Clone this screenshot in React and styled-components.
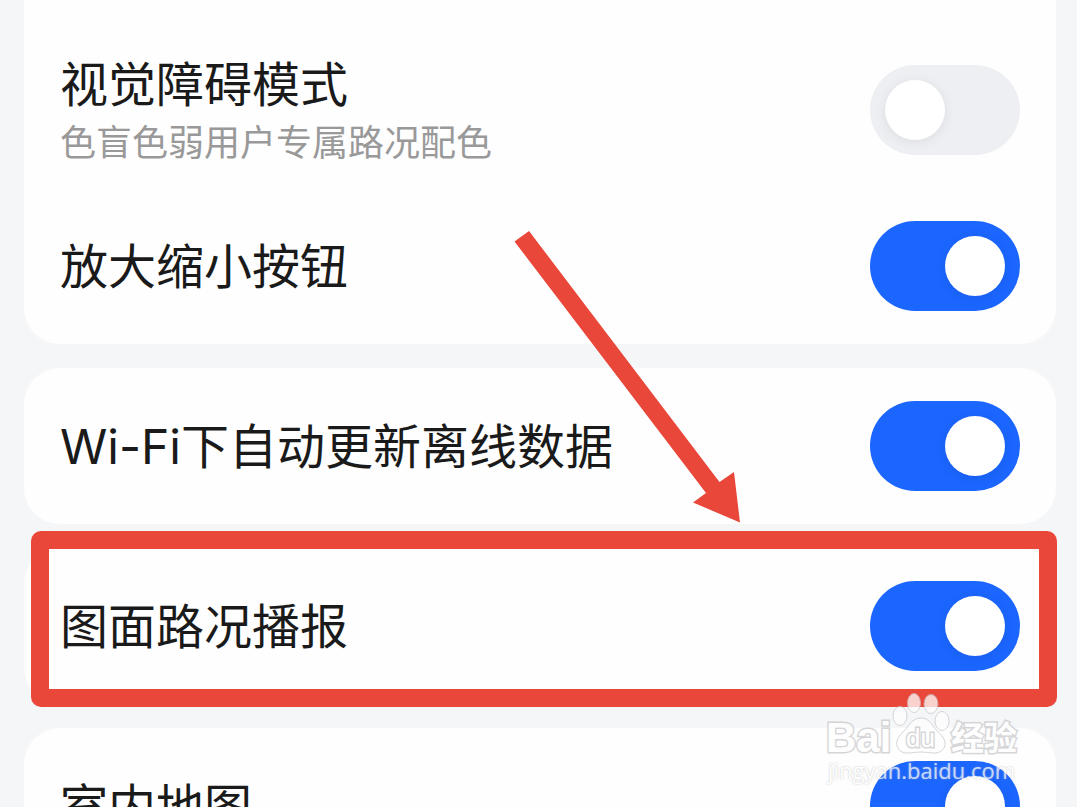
import { Component } from "react";
import styled, { createGlobalStyle } from "styled-components";

const groups = [
  [
    { id: "vision", title: "视觉障碍模式", note: "色盲色弱用户专属路况配色" },
    { id: "zoom", title: "放大缩小按钮" }
  ],
  [{ id: "wifi", title: "Wi-Fi下自动更新离线数据" }],
  [{ id: "traffic", title: "图面路况播报", marked: true }],
  [{ id: "indoor", title: "室内地图" }]
];

class App extends Component {
  constructor() {
    super();
    this.state = {
      vision: false,
      zoom: true,
      wifi: true,
      traffic: true,
      indoor: true
    };
  }

  handleChange = (e) => {
    this.setState({
      [e.target.name]: e.target.checked
    });
  };

  renderRow = (item) => {
    return (
      <Row key={item.id}>
        <Label htmlFor={item.id}>
          <Title>{item.title}</Title>
          {item.note ? <Note>{item.note}</Note> : null}
        </Label>
        <Switch
          type="checkbox"
          id={item.id}
          name={item.id}
          checked={this.state[item.id]}
          onChange={this.handleChange}
        />
      </Row>
    );
  };

  render() {
    return (
      <>
        <GlobalStyle />
        <Page>
          {groups.map((items, index) => (
            <Card key={items[0].id} $first={index === 0}>
              {items.map(this.renderRow)}
              {items[0].marked ? (
                <>
                  <Highlight />
                  <Arrow viewBox="0 0 228 294" aria-hidden="true">
                    <path
                      d="M15 1L205.500 252L220 242L226 292.500L179 272.500L192 263L0.500 11.500Z"
                      fill="#e94739"
                    />
                  </Arrow>
                </>
              ) : null}
            </Card>
          ))}
          <Watermark>
            <Logo viewBox="0 0 196 64">
              <g fill="#fff" stroke="#c9c9cc" strokeWidth="1">
                <Brand x="1" y="59">Bai</Brand>
                <ellipse cx="75" cy="23" rx="7" ry="9.500" />
                <ellipse cx="89" cy="10" rx="6.500" ry="9.500" />
                <ellipse cx="106" cy="11" rx="7" ry="9.500" />
                <ellipse cx="117" cy="28" rx="7" ry="9.500" />
                <path d="M96 25C87 25 84 33 78 39C72 45 70 50 73 55C77 63 87 59 96 59C105 59 114 63 119 55C122 50 119 44 113 39C107 33 105 25 96 25Z" />
                <Du x="81" y="54">du</Du>
                <Chinese x="126" y="57">经验</Chinese>
              </g>
            </Logo>
            <Site>jingyan.baidu.com</Site>
          </Watermark>
        </Page>
      </>
    );
  }
}

export default App;

const GlobalStyle = createGlobalStyle`
* {
  box-sizing:border-box;
}
body {
  margin:0;
  background:#f5f6f8;
  font-family:Inter, "Noto Sans CJK SC", sans-serif;
}
`

const Page = styled.main`
position:relative;
display:flex;
flex-direction:column;
gap:24px;
height:100vh;
padding:0 21px 0 24px;
overflow:hidden;
`

const Card = styled.section`
position:relative;
flex-shrink:0;
padding-top:${(props) => (props.$first ? "32px" : "0")};
background:#fefefe;
border-radius:${(props) => (props.$first ? "0 0 36px 36px" : "36px")};
`

const Row = styled.div`
display:flex;
align-items:center;
justify-content:space-between;
height:156px;
padding:0 36px;
`

const Label = styled.label`
display:flex;
flex-direction:column;
padding-top:2px;
color:#1a1a1a;
`

const Title = styled.span`
font-size:48px;
line-height:64px;
`

const Note = styled.span`
color:#999;
font-size:36px;
line-height:52px;
`

const Switch = styled.input`
appearance:none;
flex-shrink:0;
display:flex;
align-items:center;
width:150px;
height:90px;
margin:0;
padding:0 15px;
border-radius:45px;
background:#eeeff3;
cursor:pointer;
&::before {
  content:"";
  width:60px;
  height:60px;
  border-radius:50%;
  background:#fff;
  box-shadow:0 2px 12px rgba(0,0,0,0.08);
}
&:checked {
  justify-content:flex-end;
  background:#1b66ff;
}
`

const Highlight = styled.div`
position:absolute;
top:-17px;
right:-1px;
bottom:-3px;
left:7px;
border:18px solid #e94739;
border-radius:10px;
pointer-events:none;
`

const Arrow = styled.svg`
position:absolute;
top:-318px;
left:490px;
width:228px;
height:294px;
pointer-events:none;
`

const Watermark = styled.div`
position:absolute;
right:56px;
bottom:24px;
display:flex;
flex-direction:column;
width:196px;
opacity:0.75;
pointer-events:none;
`

const Logo = styled.svg`
display:block;
width:196px;
height:64px;
overflow:visible;
`

const Brand = styled.text`
font-family:"Liberation Sans", sans-serif;
font-size:42px;
font-weight:700;
stroke-width:3px;
paint-order:stroke;
`

const Du = styled.text`
font-family:"Liberation Sans", sans-serif;
font-size:26px;
stroke-width:3px;
paint-order:stroke;
`

const Chinese = styled.text`
font-family:"Noto Sans CJK SC", sans-serif;
font-size:33px;
font-weight:700;
stroke-width:3px;
paint-order:stroke;
`

const Site = styled.span`
padding-left:3px;
color:#fff;
font-family:"Open Sans", sans-serif;
font-size:22px;
line-height:26px;
text-shadow:0 0 2px #aaa;
`
